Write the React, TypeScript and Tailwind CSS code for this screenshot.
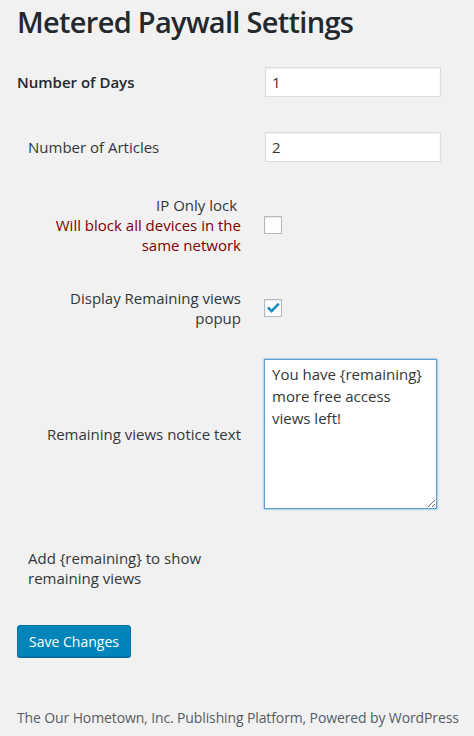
import React from 'react';

const font = { fontFamily: '"Open Sans", "Noto Sans", sans-serif' };

function Checkbox({ checked }: { checked?: boolean }) {
  return (
    <span className="flex h-[18px] w-[18px] items-center justify-center border border-[#b4b9be] bg-white shadow-[inset_0_1px_2px_rgba(0,0,0,0.1)]">
      {checked && (
        <svg width="16" height="16" viewBox="0 0 16 16">
          <path d="M2 8.3l1.8-1.8 2.8 2.8 6.3-6.5 1.8 1.8-8.1 8.4z" fill="#1e8cbe" />
        </svg>
      )}
    </span>
  );
}

export default function App() {
  return (
    <div className="min-h-screen bg-[#f1f1f1] px-[17px] text-[15px] text-[#32373c]" style={font}>
      <h1 className="pt-[2px] text-[29px] font-semibold leading-[40px] tracking-[-0.7px] text-[#23282d]">
        Metered Paywall Settings
      </h1>

      <div className="mt-[25px] flex h-[30px] items-center">
        <div className="w-[224px] font-semibold text-[#23282d]">Number of Days</div>
        <input
          readOnly
          value="1"
          className="ml-[24px] h-[30px] w-[176px] border border-[#ddd] bg-white px-[6px] text-[#32373c] shadow-[inset_0_1px_2px_rgba(0,0,0,0.07)] outline-none"
        />
      </div>

      <div className="mt-[35px] flex h-[30px] items-center">
        <div className="w-[224px] pl-[11px]">Number of Articles</div>
        <input
          readOnly
          value="2"
          className="ml-[24px] h-[30px] w-[176px] border border-[#ddd] bg-white px-[6px] text-[#32373c] shadow-[inset_0_1px_2px_rgba(0,0,0,0.07)] outline-none"
        />
      </div>

      <div className="mt-[33px] flex items-center">
        <div className="ml-[14px] w-[210px] text-right leading-[20px]">
          <div className="font-medium">IP Only lock&nbsp;</div>
          <div className="text-[#800000]">Will block all devices in the same network</div>
        </div>
        <div className="ml-[23px]">
          <Checkbox />
        </div>
      </div>

      <div className="mt-[33px] flex items-center">
        <div className="ml-[14px] w-[210px] text-right leading-[20px]">Display Remaining views popup</div>
        <div className="ml-[23px]">
          <Checkbox checked />
        </div>
      </div>

      <div className="mt-[31px] flex items-center">
        <div className="ml-[14px] w-[210px] text-right leading-[20px]">Remaining views notice text</div>
        <textarea
          readOnly
          defaultValue="You have {remaining} more free access views left!"
          className="ml-[23px] h-[150px] w-[173px] border border-[#5b9dd9] bg-white px-[7px] pt-[3px] text-[15px] leading-[22px] text-[#32373c] shadow-[0_0_2px_rgba(30,140,190,0.8)] outline-none"
        />
      </div>

      <div className="mt-[39px] w-[224px] pl-[11px] leading-[20px]">{'Add {remaining} to show remaining views'}</div>

      <button className="mt-[37px] h-[32px] w-[114px] rounded-[3px] border border-[#0073aa] bg-[#0085ba] text-[14px] text-white shadow-[0_1px_0_#006799]">
        Save Changes
      </button>

      <div className="mt-[51px] whitespace-nowrap text-[14px] leading-[20px] tracking-[-0.12px] text-[#555d66]">
        The Our Hometown, Inc. Publishing Platform, Powered by WordPress
      </div>
    </div>
  );
}
